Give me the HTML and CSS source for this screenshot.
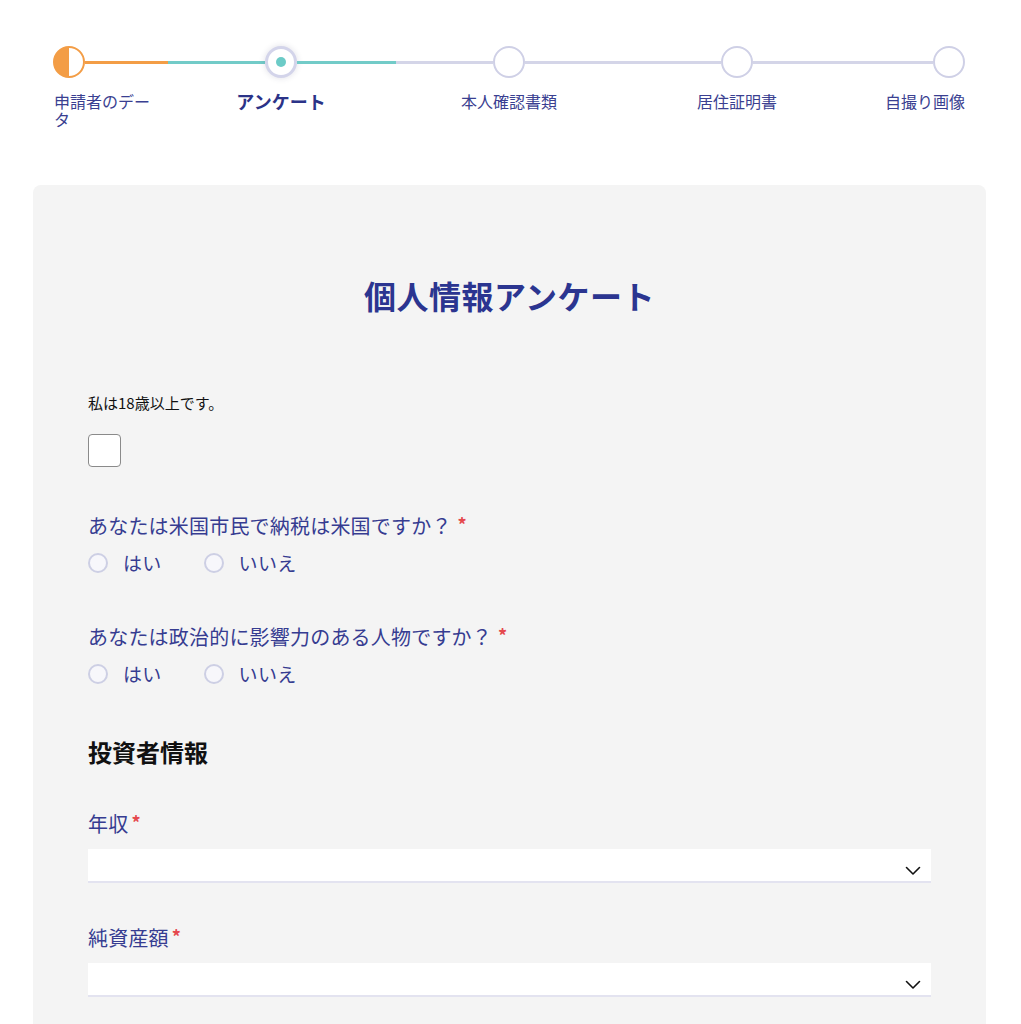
FILE: index.html
```html
<!DOCTYPE html>
<html lang="ja">
<head>
<meta charset="utf-8">
<title>個人情報アンケート</title>
<link rel="stylesheet" href="styles.css">
</head>
<body>
<div class="stepper">
  <div class="track">
    <span class="dot dot-half"></span>
    <span class="bar bar-edge bar-first"></span>
    <span class="dot dot-current"><span class="dot-inner"></span></span>
    <span class="bar bar-mid bar-second"></span>
    <span class="dot"></span>
    <span class="bar bar-mid"></span>
    <span class="dot"></span>
    <span class="bar bar-edge"></span>
    <span class="dot"></span>
  </div>
  <div class="labels">
    <div class="label label-first">申請者のデータ</div>
    <div class="label label-current">アンケート</div>
    <div class="label label-3">本人確認書類</div>
    <div class="label label-4">居住証明書</div>
    <div class="label label-last">自撮り画像</div>
  </div>
</div>

<main class="card">
  <h1 class="title">個人情報アンケート</h1>

  <p class="age-text">私は18歳以上です。</p>
  <div class="checkbox"></div>

  <div class="question q1">
    <div class="q-label">あなたは米国市民で納税は米国ですか？<span class="req">*</span></div>
    <div class="radios">
      <label class="radio"><span class="radio-circle"></span><span class="radio-text">はい</span></label>
      <label class="radio"><span class="radio-circle"></span><span class="radio-text">いいえ</span></label>
    </div>
  </div>

  <div class="question q2">
    <div class="q-label">あなたは政治的に影響力のある人物ですか？<span class="req">*</span></div>
    <div class="radios">
      <label class="radio"><span class="radio-circle"></span><span class="radio-text">はい</span></label>
      <label class="radio"><span class="radio-circle"></span><span class="radio-text">いいえ</span></label>
    </div>
  </div>

  <h2 class="section">投資者情報</h2>

  <div class="field f1">
    <div class="f-label">年収<span class="req">*</span></div>
    <div class="select">
      <svg class="chev" width="16" height="10" viewBox="0 0 16 10"><path d="M1.5 1.5 L8 8 L14.5 1.5" fill="none" stroke="#111" stroke-width="1.6" stroke-linecap="round" stroke-linejoin="round"/></svg>
    </div>
  </div>

  <div class="field f2">
    <div class="f-label">純資産額<span class="req">*</span></div>
    <div class="select">
      <svg class="chev" width="16" height="10" viewBox="0 0 16 10"><path d="M1.5 1.5 L8 8 L14.5 1.5" fill="none" stroke="#111" stroke-width="1.6" stroke-linecap="round" stroke-linejoin="round"/></svg>
    </div>
  </div>
</main>
</body>
</html>
```
FILE: styles.css
```css
html {
  overflow: hidden;
}
body {
  margin: 0;
  background: #ffffff;
  font-family: "Noto Sans CJK JP", "Noto Sans", sans-serif;
  color: #363b8f;
}

/* ---------- stepper ---------- */
.stepper {
  width: 912px;
  margin: 0 0 0 53px;
  padding-top: 46px;
}
.track {
  display: flex;
  align-items: center;
  height: 32px;
}
.dot {
  flex: 0 0 32px;
  width: 32px;
  height: 32px;
  box-sizing: border-box;
  border-radius: 50%;
  border: 2.5px solid #cfd0e6;
  background: #ffffff;
  display: flex;
  align-items: center;
  justify-content: center;
}
.dot-half {
  border-color: #f39d46;
  background: linear-gradient(to right, #f39d46 50%, #ffffff 50%);
}
.dot-current {
  border: 3px solid #d3d4ea;
  box-shadow: 0 0 6px rgba(40, 40, 90, 0.15);
}
.dot-inner {
  width: 10px;
  height: 10px;
  border-radius: 50%;
  background: #6ccbc7;
}
.bar {
  height: 3px;
  background: #d4d5e8;
}
.bar-edge {
  flex: 180 1 0;
}
.bar-mid {
  flex: 196 1 0;
}
.bar-first {
  background: linear-gradient(to right, #f39d46 46%, #72cbc8 46%);
}
.bar-second {
  background: linear-gradient(to right, #72cbc8 50.5%, #d4d5e8 50.5%);
}
.labels {
  display: grid;
  grid-template-columns: repeat(8, 114px);
  margin-top: 14px;
}
.label {
  font-size: 16px;
  line-height: 18px;
  color: #3a3f91;
}
.label-first {
  grid-column: 1 / 2;
  width: 104px;
  padding-left: 1px;
}
.label-current {
  grid-column: 2 / 4;
  text-align: center;
  font-size: 18px;
  font-weight: 700;
  color: #2b3388;
}
.label-3 {
  grid-column: 4 / 6;
  text-align: center;
}
.label-4 {
  grid-column: 6 / 8;
  text-align: center;
}
.label-last {
  grid-column: 8 / 9;
  text-align: right;
}

/* ---------- card ---------- */
.card {
  margin: 0 35px 0 33px;
  margin-top: 57px;
  background: #f4f4f4;
  border-radius: 8px;
  padding: 90px 55px 60px 55px;
}
.title {
  margin: 0;
  text-align: center;
  font-size: 32px;
  line-height: 40px;
  font-weight: 700;
  color: #2b3590;
  letter-spacing: 0.5px;
}
.age-text {
  margin: 78px 0 0 0;
  font-size: 15px;
  line-height: 20px;
  color: #111111;
}
.checkbox {
  margin-top: 21px;
  width: 33px;
  height: 33px;
  box-sizing: border-box;
  border: 1.5px solid #8a8a8a;
  border-radius: 4px;
  background: #ffffff;
}
.question {
  margin-top: 47px;
}
.q2 {
  margin-top: 50px;
}
.q-label,
.f-label {
  font-size: 20px;
  line-height: 24px;
  letter-spacing: 0.2px;
  color: #363c91;
}
.req {
  color: #e5484d;
  font-size: 18px;
  font-weight: 700;
  margin-left: 6px;
  position: relative;
  top: -2px;
}
.f-label .req {
  margin-left: 3px;
}
.radios {
  margin-top: 13px;
  display: flex;
  align-items: center;
  gap: 42px;
}
.radio {
  display: flex;
  align-items: center;
  gap: 15px;
  height: 24px;
}
.radio-circle {
  width: 20px;
  height: 20px;
  box-sizing: border-box;
  border-radius: 50%;
  border: 2px solid #cdcfe4;
  background: #f7f7fb;
}
.radio-text {
  font-size: 19px;
  line-height: 24px;
  letter-spacing: 0.3px;
  color: #363c91;
}
.section {
  margin: 50px 0 0 0;
  font-size: 24px;
  line-height: 32px;
  font-weight: 700;
  color: #111111;
}
.field {
  margin-top: 44px;
}
.f2 {
  margin-top: 43px;
}
.select {
  margin-top: 13px;
  height: 34px;
  box-sizing: border-box;
  background: #ffffff;
  border-bottom: 2px solid #e3e3f0;
  display: flex;
  align-items: flex-end;
  justify-content: flex-end;
  padding: 0 10px 5px 0;
}
.chev {
  display: block;
}
```
